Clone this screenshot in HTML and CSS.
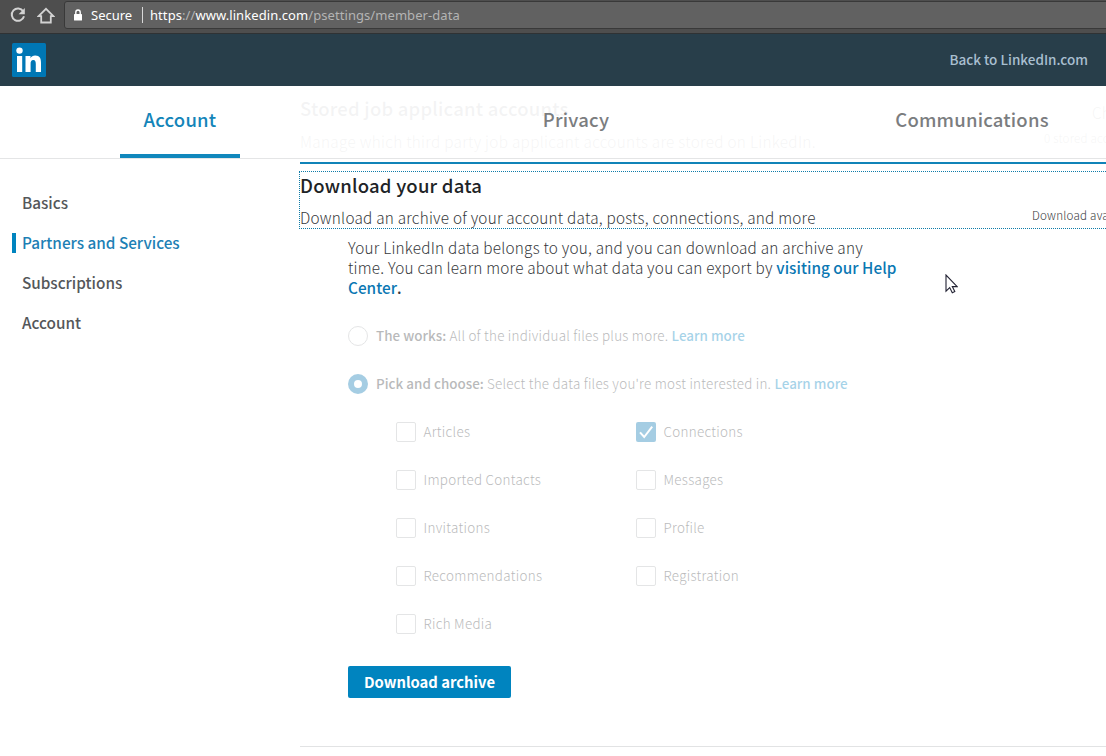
FILE: index.html
```
<!DOCTYPE html>
<html lang="en">
<head>
<meta charset="utf-8">
<title>Settings - Member data</title>
<link rel="stylesheet" href="styles.css">
</head>
<body>
<div class="browser">
  <svg class="reload" width="16" height="16" viewBox="0 0 16 16"><path d="M13.2 4.2A6.2 6.2 0 1 0 14 9.2" fill="none" stroke="#d2d2d2" stroke-width="2"/><path d="M14.8 1v6.2H8.6z" fill="#d2d2d2"/></svg>
  <svg class="home" width="18" height="17" viewBox="0 0 18 17"><path d="M1.6 9.2 9 1.800l7.400 7.400h-2.600v6.300H4.200V9.200z" fill="none" stroke="#d2d2d2" stroke-width="1.8"/></svg>
  <div class="omnibox">
    <svg class="lock" width="10" height="12" viewBox="0 0 10 12"><rect x="1" y="5" width="8" height="6.5" rx=".6" fill="#fff"/><path d="M2.800 5.500V3.200a2.200 2.200 0 0 1 4.400 0v2.300" fill="none" stroke="#fff" stroke-width="1.4"/></svg>
    <span class="secure">Secure</span>
    <span class="sep"></span>
    <span class="url"><b>https</b>://<b>www.linkedin.com</b>/psettings/member-data</span>
  </div>
</div>
<header class="topbar">
  <svg class="logo" width="34" height="34" viewBox="0 0 34 34"><rect width="34" height="34" rx="1.5" fill="#0077b5"/><g fill="#fff"><circle cx="7.5" cy="7.600" r="3.200"/><path d="M5 13h5.200v16H5zM13.500 13h5v2.200c.9-1.500 2.500-2.600 4.700-2.600 4.600 0 5.800 3 5.800 7.200V29h-5.200v-8c0-2.100-.4-3.900-2.500-3.900-2.200 0-2.700 1.700-2.700 3.900v8h-5.100z"/></g></svg>
  <a class="back">Back to LinkedIn.com</a>
</header>
<div class="page">
  <nav class="tabs">
    <a class="tab"><span class="active">Account</span></a>
    <a class="tab"><span>Privacy</span></a>
    <a class="tab"><span>Communications</span></a>
  </nav>
  <aside class="side">
    <a>Basics</a>
    <a class="current">Partners and Services</a>
    <a>Subscriptions</a>
    <a>Account</a>
  </aside>
  <main class="content">
    <section class="setting stored">
      <div><h2>Stored job applicant accounts</h2><p>Manage which third party job applicant accounts are stored on LinkedIn.</p></div>
      <div class="state"><span class="change">Change</span><span>0 stored accounts</span></div>
    </section>
    <section class="open">
      <div class="setting focus">
        <div><h2>Download your data</h2><p>Download an archive of your account data, posts, connections, and more</p></div>
        <div class="state"><span>Download available</span></div>
      </div>
      <div class="detail">
        <p class="intro">Your LinkedIn data belongs to you, and you can download an archive any<br>time. You can learn more about what data you can export by <a>visiting our Help<br>Center</a><b>.</b></p>
        <div class="form">
          <div class="option"><i class="radio"></i><span><b>The works:</b> All of the individual files plus more. <a>Learn more</a></span></div>
          <div class="option"><i class="radio on"></i><span><b>Pick and choose:</b> Select the data files you're most interested in. <a>Learn more</a></span></div>
          <div class="files">
            <div class="option"><i class="box"></i><span>Articles</span></div>
            <div class="option"><i class="box on"><svg width="20" height="20" viewBox="0 0 20 20"><path d="M4 10.300 8.200 15 16.200 4.600" fill="none" stroke="#fff" stroke-width="2"/></svg></i><span>Connections</span></div>
            <div class="option"><i class="box"></i><span>Imported Contacts</span></div>
            <div class="option"><i class="box"></i><span>Messages</span></div>
            <div class="option"><i class="box"></i><span>Invitations</span></div>
            <div class="option"><i class="box"></i><span>Profile</span></div>
            <div class="option"><i class="box"></i><span>Recommendations</span></div>
            <div class="option"><i class="box"></i><span>Registration</span></div>
            <div class="option"><i class="box"></i><span>Rich Media</span></div>
          </div>
        </div>
        <button class="download">Download archive</button>
      </div>
    </section>
  </main>
</div>
<svg class="cursor" width="13" height="20" viewBox="0 0 13 20"><path d="M1 1v16.200l3.700-3.600 2.600 5.200 2.500-1.200-2.500-5h4.900z" fill="#fff" stroke="#222233" stroke-width="1.100"/></svg>
</body>
</html>
```
FILE: styles.css
```
* { box-sizing: border-box; }
body { margin: 0; height: 756px; overflow: hidden; background: #fff; position: relative; font-family: "Noto Sans CJK SC", "Open Sans", sans-serif; color: #36393c; }
h2, p { margin: 0; }
svg { display: block; flex: none; }

.browser { height: 34px; background: #4e4e4e; border-bottom: 1px solid #2f3234; display: flex; align-items: flex-start; padding-left: 10px; font: 13px/18px "Noto Sans", sans-serif; color: #fff; overflow: hidden; }
.reload { margin-top: 7px; }
.home { margin: 7px 0 0 11px; }
.omnibox { margin: 1px 0 0 9px; width: 1060px; flex: none; height: 28px; display: flex; align-items: center; padding-left: 8px; background: #616161; border: 1px solid #393939; border-radius: 3px; white-space: pre; }
.secure { margin-left: 8px; width: 51px; }
.sep { width: 1px; height: 16px; background: #d8d8d8; margin-right: 7px; }
.url { color: #b4b4b4; letter-spacing: .07px; }
.url b { font-weight: 400; color: #fff; }

.topbar { height: 52px; background: #283e4a; display: flex; align-items: center; justify-content: space-between; padding: 0 18px 0 12px; }
.back { font-size: 13.500px; font-weight: 500; line-height: 20px; padding-bottom: 2px; color: #a9bfd0; }

.page { position: relative; display: flex; height: 670px; }
.tabs { position: absolute; inset: 0 0 auto 0; z-index: 2; height: 73px; display: flex; background: rgba(255,255,255,.95); border-bottom: 1px solid #e4e5e6; margin-left: -18px; }
.tab { width: 396px; flex: none; display: flex; justify-content: center; font-size: 18.500px; font-weight: 500; line-height: 24px; letter-spacing: .2px; color: #7b7d7f; }
.tab span { height: 72px; padding: 21px 24px 0; }
.tab .active { color: #1485b9; border-bottom: 4px solid #1187bc; }

.side { width: 300px; flex: none; padding: 107px 0 0 12px; display: flex; flex-direction: column; gap: 20px; }
.side a { height: 20px; font-size: 15.300px; font-weight: 500; line-height: 18px; padding-left: 10px; color: #54575a; }
.side .current { color: #1d7fb5; border-left: 4px solid #0084bf; padding-left: 6px; }

.content { width: 830px; flex: none; }
.setting { display: flex; justify-content: space-between; white-space: nowrap; }
.setting h2 { font-size: 18.500px; font-weight: 500; line-height: 26px; letter-spacing: .22px; color: #202326; }
.setting p { font-size: 15.300px; font-weight: 300; line-height: 24px; letter-spacing: .235px; margin-top: 7px; }
.stored { height: 76px; padding-top: 9px; }
.stored p { letter-spacing: .3px; margin-top: 8px; }
.state { width: 100px; display: flex; flex-direction: column; font-size: 11.600px; font-weight: 300; line-height: 20px; letter-spacing: .22px; margin-left: auto; }
.stored .change { font-size: 15.300px; line-height: 24px; padding: 0 0 0 48px; margin: 5px 0 4px; }
.stored .state { width: 86px; }
.open { border-top: 2px solid #1083b8; border-bottom: 1px solid #e2e3e4; height: 585px; padding-top: 7px; }
.focus { height: 58px; margin-left: -1px; border: 1px dotted #0f7ca8; }
.focus .state { width: 97px; padding-top: 33px; }

.detail { padding: 8px 0 0 48px; }
.intro { font-size: 15.300px; font-weight: 300; line-height: 20px; letter-spacing: .225px; white-space: nowrap; }
.intro a { font-weight: 500; color: #0a77b3; letter-spacing: .03px; }
.intro b { font-weight: 500; }
.form { opacity: .35; padding-top: 15px; }
.option { height: 48px; display: flex; align-items: center; gap: 8px; font-size: 13.400px; font-weight: 300; letter-spacing: .25px; white-space: nowrap; line-height: 20px; }
.option span { padding-bottom: 2px; }
.option b, .option a { font-weight: 500; letter-spacing: .03px; }
.option a { color: #0084bf; }
.radio, .box { width: 20px; height: 20px; flex: none; border: 1px solid #b4b7b9; }
.radio { border-radius: 50%; }
.radio.on { border: 6px solid #0073b1; }
.box { border-radius: 2px; }
.box + span { letter-spacing: .3px; margin-left: -.5px; }
.box.on { border: 0; background: #0073b1; }
.files { display: grid; grid-template-columns: 240px 240px; padding-left: 48px; }
.download { display: block; margin-top: 18px; width: 163px; height: 32px; padding: 0 0 1px; border: 0; border-radius: 2px; background: #0084bf; color: #fff; font: 700 14.800px/20px "Noto Sans CJK SC", sans-serif; }
.cursor { position: absolute; left: 945px; top: 274px; z-index: 3; }
```
